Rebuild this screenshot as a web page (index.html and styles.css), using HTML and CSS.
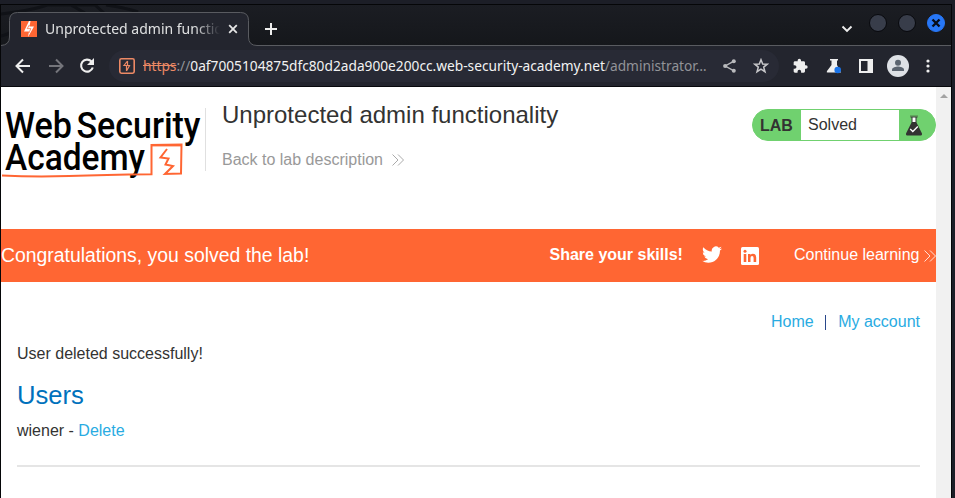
FILE: index.html
```
<!DOCTYPE html>
<html lang="en">
<head>
<meta charset="utf-8">
<title>Unprotected admin functionality</title>
<link rel="stylesheet" href="styles.css">
</head>
<body>
<div class="window">
  <div class="titlebar">
    <svg class="frame" width="950" height="41" viewBox="0 0 950 41" fill="none">
      <path d="M0 9Q32 5 46 0H94L103 8M0 31Q18 27 32 8M70 0L84 8M105 0Q126 3 137 7" stroke="#101217" stroke-width="3"/>
      <path d="M0 41V40.500Q8.500 40 8.500 32V15.500Q8.500 7.500 16.500 7.500H239.500Q247.500 7.500 247.500 15.500V32Q247.500 40.500 256 40.500V41Z" fill="#23252e"/>
      <path d="M0 40.500Q8.500 40 8.500 32V15.500Q8.500 7.500 16.500 7.500H239.500Q247.500 7.500 247.500 15.500V32Q247.500 40.500 256 40.500H950" stroke="#595b60"/>
    </svg>
    <div class="tab">
      <svg class="favicon" width="16" height="16" viewBox="0 0 16 16"><path fill="#ff6633" d="M0 0h16v16H0z"/><path d="M9.500 0L8.500 5.500H13L7 16L8 10.500H3L8 0Z" fill="#fff"/><path d="M8.300 4L6.200 7.600H9.800L8 12" fill="none" stroke="#ff6633" stroke-width=".7"/></svg>
      <span class="tab-title">Unprotected admin functionality</span>
      <svg class="tab-close" width="10" height="10" viewBox="0 0 10 10"><path d="M1.200 1.200l7.600 7.600M8.800 1.200L1.200 8.800" stroke="#e6e6e6" stroke-width="1.800"/></svg>
    </div>
    <svg class="new-tab" width="12" height="12" viewBox="0 0 12 12"><path d="M6 0v12M0 6h12" stroke="#eee" stroke-width="2"/></svg>
    <div class="controls">
      <svg class="chevron" width="12" height="8" viewBox="0 0 12 8" fill="none"><path d="M1.500 1.500L6 6l4.500-4.500" stroke="#eee" stroke-width="1.900"/></svg>
      <i class="dot"></i><i class="dot"></i>
      <i class="dot close"><svg width="10" height="10" viewBox="0 0 10 10"><path d="M1.500 1.500l7 7M8.500 1.500l-7 7" stroke="#080c18" stroke-width="2.400"/></svg></i>
    </div>
  </div>
  <div class="toolbar">
    <svg class="back" width="16" height="16" viewBox="0 0 16 16" fill="none" stroke="#eee" stroke-width="2"><path d="M15 8H2M8 1.500L1.500 8L8 14.500"/></svg>
    <svg class="forward" width="16" height="16" viewBox="0 0 16 16" fill="none" stroke="#74757b" stroke-width="2"><path d="M1 8h13M8 1.500L14.500 8L8 14.500"/></svg>
    <svg class="reload" width="16" height="16" viewBox="0 0 16 16" fill="none"><path d="M12.500 3.500A6 6 0 1 0 13.800 9.500" stroke="#eee" stroke-width="2.100"/><path d="M15 0v7H8z" fill="#eee"/></svg>
    <div class="address">
      <svg width="16" height="16" viewBox="0 0 16 16" fill="none" stroke="#ed8965"><rect x=".8" y=".8" width="14.400" height="14.400" rx="1.600" stroke-width="1.600"/><path d="M8.500 3L5 7.500H10.500L7.500 13M8.500 3V7.500M7.500 8V13" stroke-width="1.200"/></svg>
      <div class="url"><span class="scheme">https</span><span class="slashes">://</span><span class="host">0af7005104875dfc80d2ada900e200cc.web-security-academy.net</span><span class="path">/administrator…</span></div>
      <svg class="share" width="13" height="14" viewBox="0 0 13 14"><path d="M11 2.200L2.200 7L11 11.800" fill="none" stroke="#b9babd" stroke-width="1.400"/><g fill="#b9babd"><circle cx="10.800" cy="2.200" r="2"/><circle cx="2.200" cy="7" r="2.100"/><circle cx="10.800" cy="11.800" r="2"/></g></svg>
      <svg width="16" height="16" viewBox="0 0 16 16" fill="none" stroke="#c7c7ca" stroke-width="1.500"><path d="M8 1.700L9.700 6L14.200 6.200L10.700 9.100L12 13.700L8 11.100L4 13.700L5.300 9.100L1.800 6.200L6.300 6Z"/></svg>
    </div>
    <div class="tools">
      <svg width="16" height="16" viewBox="0 0 24 24" fill="#eee"><path d="M21 11h-1.500V7c0-1.100-.9-2-2-2h-4V3.500a2.500 2.500 0 0 0-5 0V5h-4c-1.100 0-2 .9-2 2v3.800H4a2.700 2.700 0 0 1 0 5.400H2.500V20c0 1.100.9 2 2 2h3.800v-1.500a2.700 2.700 0 0 1 5.400 0V22h3.800c1.100 0 2-.9 2-2v-4H21a2.500 2.500 0 0 0 0-5z"/></svg>
      <svg width="16" height="16" viewBox="0 0 16 16"><path d="M4 1h8v1.500h-1V7l4 7.500H1.500Q.2 14.500 1 13L5.500 7V2.500H4z" fill="#eee"/><circle cx="11.700" cy="12" r="3.300" fill="#1a73e8"/></svg>
      <svg width="14" height="14" viewBox="0 0 14 14"><path fill="#eee" fill-rule="evenodd" d="M0 0h14v14H0zM2 2v10h6.500V2z"/></svg>
      <svg width="22" height="22" viewBox="0 0 22 22"><circle cx="11" cy="11" r="11" fill="#dee1e6"/><g fill="#5b6470"><circle cx="11" cy="7.800" r="3"/><path d="M5 16v-1.500c0-2 4-3 6-3s6 1 6 3V16z"/></g></svg>
      <svg width="4" height="14" viewBox="0 0 4 14" fill="#eee"><circle cx="2" cy="2" r="1.600"/><circle cx="2" cy="7" r="1.600"/><circle cx="2" cy="12" r="1.600"/></svg>
    </div>
  </div>
  <div class="viewport">
    <main class="page">
      <header class="lab-header">
        <svg class="logo" width="205" height="75" viewBox="1 107 205 75">
          <g class="logo-text">
            <text x="5" y="137.500" textLength="67" lengthAdjust="spacingAndGlyphs">Web</text>
            <text x="76.500" y="137.500" textLength="124" lengthAdjust="spacingAndGlyphs">Security</text>
            <text x="5" y="170" textLength="140" lengthAdjust="spacingAndGlyphs">Academy</text>
          </g>
          <g fill="none" stroke="#ff6633" stroke-width="2"><path d="M2 175.500Q34 177 69 176T151.500 174.300V145L181.500 144.500L181 173.500L165 174L173 166L165.500 164.500L168.500 158.500L160.500 157.500L167 149"/><path d="M151.500 145.200H182" stroke-width="2.400"/></g>
        </svg>
        <div class="heading">
          <h2>Unprotected admin functionality</h2>
          <a class="back-link">Back to lab description <svg width="12" height="12" viewBox="0 0 12 12" fill="none" stroke="#aaa"><path d="M.5.500L6 6L.5 11.500M6 .5L11.500 6L6 11.500"/></svg></a>
        </div>
        <div class="status"><b>LAB</b><span>Solved</span>
          <svg width="18" height="21" viewBox="0 0 18 21"><path d="M5.500 1.500h7v1h-1v5l5.500 11Q17.300 20.500 16 20.500H2Q.7 20.500 1 18.500L6.500 7.500v-5h-1z" fill="#333332"/><path d="M7.500 2.500h3V7h-3z" fill="#fff"/><path d="M5.200 14l2.600 2.500l5-5" fill="none" stroke="#fff" stroke-width="1.300"/><path d="M5 1h8" stroke="#557b4f"/></svg>
        </div>
      </header>
      <section class="banner">
        <h4>Congratulations, you solved the lab!</h4>
        <b>Share your skills!</b>
        <svg class="twitter" width="20" height="18" viewBox="0 2.500 24 20" fill="#fff"><path d="M23.950 4.570a10 10 0 0 1-2.820.77 4.960 4.960 0 0 0 2.160-2.720c-.95.550-2 .96-3.130 1.190a4.920 4.920 0 0 0-8.380 4.480C7.690 8.090 4.070 6.130 1.640 3.160a4.820 4.820 0 0 0-.67 2.480c0 1.710.87 3.210 2.190 4.100a4.900 4.900 0 0 1-2.230-.62v.06a4.920 4.920 0 0 0 3.950 4.830 5 5 0 0 1-2.210.08 4.940 4.940 0 0 0 4.600 3.420A9.870 9.870 0 0 1 0 19.540a13.990 13.990 0 0 0 7.560 2.210c9.050 0 14-7.500 14-13.980 0-.21 0-.42-.02-.63a9.940 9.940 0 0 0 2.410-2.570z"/></svg>
        <svg class="linkedin" width="18" height="18" viewBox="0 0 18 18"><rect width="18" height="18" rx="1.500" fill="#fff"/><g fill="#ff6633"><circle cx="4" cy="4.200" r="1.500"/><path d="M2.700 7h2.600v8H2.700zM7 7h2.500v1.100q.8-1.300 2.500-1.300 3.200 0 3.200 3.700V15h-2.600v-4q0-2-1.500-2-1.600 0-1.600 2v4H7z"/></g></svg>
        <a>Continue learning</a>
        <svg class="more" width="12" height="12" viewBox="0 0 12 12" fill="none" stroke="#ffe0d6"><path d="M.5.500L6 6L.5 11.500M6 .5L11.500 6L6 11.500"/></svg>
      </section>
      <section class="content">
        <nav><a>Home</a><i></i><a>My account</a></nav>
        <p>User deleted successfully!</p>
        <h1>Users</h1>
        <div class="user">wiener - <a>Delete</a></div>
        <hr>
      </section>
    </main>
    <div class="scrollbar"><svg width="8" height="4" viewBox="0 0 8 4"><path d="M0 4L4 0L8 4z" fill="#a3a3a3"/></svg></div>
  </div>
</div>
</body>
</html>
```
FILE: styles.css
```
* { box-sizing: border-box; }
body { margin: 0; height: 498px; overflow: hidden; background: #1c1e27; font: 16px/20px "Liberation Sans", Arial, sans-serif; color: #333332; }
svg { display: block; flex: none; }
h1, h2, h4, p { margin: 0; font-weight: 400; }
.window { width: 952px; height: 494px; margin-top: 4px; border: solid #050608; border-width: 1px 1px 0; display: flex; flex-direction: column; }
.titlebar { position: relative; height: 41px; flex: none; display: flex; background: linear-gradient(#1b1d23, #15171b); }
.frame { position: absolute; left: 0; top: 0; }
.tab { position: relative; width: 248px; padding: 16px 0 0 20px; display: flex; align-items: flex-start; font: 14px/18px "Noto Sans", sans-serif; color: #dfe0e1; }
.tab-title { width: 175px; margin: -1px 0 0 8px; overflow: hidden; white-space: nowrap; -webkit-mask-image: linear-gradient(90deg, #000 150px, transparent 175px); mask-image: linear-gradient(90deg, #000 150px, transparent 175px); }
.tab-close { margin: 3px 0 0 8px; }
.new-tab { position: relative; margin: 18px 0 0 16px; }
.controls { position: relative; display: flex; align-items: flex-start; gap: 11px; margin: 9px 6px 0 auto; }
.chevron { margin: 11px 5px 0 0; }
.dot { width: 18px; height: 18px; border-radius: 50%; background: #383d4a; border: 1px solid #08090d; display: flex; align-items: center; justify-content: center; }
.close { background: #2777f7; border-color: #2777f7; }
.toolbar { height: 41px; flex: none; display: flex; align-items: center; background: #23252e; border-bottom: 1px solid #08090d; padding-left: 14px; }
.forward { margin-left: 17px; }
.reload { margin-left: 15px; }
.address { width: 670px; height: 32px; margin-left: 14px; padding-left: 10px; border-radius: 16px; background: #282a35; display: flex; align-items: center; }
.url { width: 563px; margin-left: 8px; white-space: nowrap; display: flex; font: 13.720px/20px "Noto Sans", sans-serif; color: #929398; }
.scheme { color: #ed8965; text-decoration: line-through; }
.host { color: #f2f2f2; }
.share { margin: 0 17px; }
.tools { display: flex; align-items: center; justify-content: space-between; width: 138px; margin-left: 13px; }
.tools svg:nth-child(4) { margin-left: -4px; }
.viewport { flex: 1; display: flex; background: #fff; }
.page { width: 935px; }
.lab-header { height: 142px; display: flex; align-items: flex-start; padding-top: 20px; }
.logo { overflow: visible; }
.logo-text { font: 500 37px Roboto, sans-serif; fill: #000; }
.heading { border-left: 1px solid #e0e0e0; height: 63px; margin-top: 1px; padding-left: 16px; width: 547px; margin-left: -1px; }
.heading h2 { font-size: 24px; line-height: 28px; margin-top: -7px; }
.back-link { color: #999; display: flex; align-items: center; gap: 9px; margin-top: 21px; height: 20px; }
.status { width: 184px; height: 32px; margin-top: 2px; border: 1px solid #70d16f; border-radius: 16px; background: #70d16f; display: flex; align-items: center; overflow: hidden; }
.status b { width: 48px; padding: 1px 0 0 7px; }
.status span { width: 98px; height: 30px; line-height: 30px; background: #fff; padding-left: 7px; }
.status svg { margin-left: 6px; }
.banner { height: 53px; padding-bottom: 1px; background: #ff6633; color: #fff; display: flex; align-items: center; overflow: hidden; }
.banner h4 { font-size: 19.400px; width: 548.500px; }
.banner b { width: 152.500px; }
.linkedin { margin: 1px 0 0 19px; }
.banner a { margin-left: 35px; width: 126px; white-space: nowrap; }
.more { margin: 1px 0 0 4px; }
.content { padding: 30px 16px 0; }
.content a { color: #29abe2; }
nav { display: flex; justify-content: flex-end; align-items: center; }
nav i { width: 1.500px; height: 15px; margin: 0 12px 0 11px; background: #29478b; }
.content p { margin-top: 12px; }
.content h1 { font-size: 25.600px; line-height: 30px; margin-top: 16px; color: #0071bc; }
.user { margin-top: 11px; }
hr { height: 2px; border: 0; margin: 24px 0 0; background: #e5e5e5; }
.scrollbar { width: 15px; background: #f1f1f1; padding: 7px 0 0 4px; }
```
